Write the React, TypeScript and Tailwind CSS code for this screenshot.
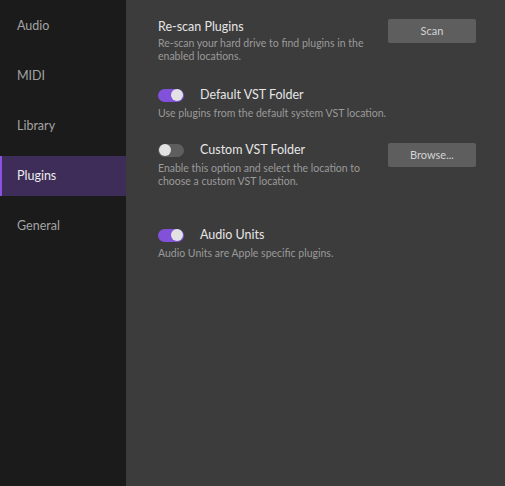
import React from "react"

const nav = ["Audio", "MIDI", "Library", "Plugins", "General"]

function Toggle({ on }: { on: boolean }) {
  return (
    <div
      className={`w-[26px] h-[13px] rounded-full flex items-center px-[1px] ${
        on ? "bg-[#8152d9] justify-end" : "bg-[#5e5e5e] justify-start"
      }`}
    >
      <div className="w-[12px] h-[12px] rounded-full bg-[#e2e2e2]" />
    </div>
  )
}

function Button({ label }: { label: string }) {
  return (
    <div className="w-[88px] h-[24px] shrink-0 rounded-[2px] bg-[#5e5e5e] flex items-center justify-center text-[11px] text-[#d4d4d4]">
      {label}
    </div>
  )
}

export default function App() {
  return (
    <div
      className="w-[505px] h-[486px] flex bg-[#3c3c3c]"
      style={{ fontFamily: "Lato, 'Noto Sans', sans-serif" }}
    >
      <aside className="w-[126px] h-full bg-[#1b1b1b] flex flex-col gap-[10px] pt-[6px]">
        {nav.map((item) => (
          <div
            key={item}
            className={`h-10 flex items-center text-[12.5px] ${
              item === "Plugins"
                ? "bg-[#3e2d58] border-l-2 border-[#8a52e2] pl-[15px] text-[#ececec]"
                : "pl-[17px] text-[#a3a3a3]"
            }`}
          >
            {item}
          </div>
        ))}
      </aside>

      <main className="flex-1 pl-[32px] pr-[29px] pt-[19px] flex flex-col">
        <div className="flex justify-between">
          <div>
            <div className="text-[12.5px] leading-4 text-[#e6e6e6]">Re-scan Plugins</div>
            <p className="mt-[2px] w-[220px] text-[10.5px] leading-[13px] text-[#9a9a9a]">
              Re-scan your hard drive to find plugins in the enabled locations.
            </p>
          </div>
          <Button label="Scan" />
        </div>

        <div className="mt-[24px]">
          <div className="h-4 flex items-center gap-4">
            <Toggle on />
            <span className="text-[12.5px] text-[#e6e6e6]">Default VST Folder</span>
          </div>
          <p className="mt-[4px] text-[10.5px] leading-[13px] text-[#9a9a9a]">
            Use plugins from the default system VST location.
          </p>
        </div>

        <div className="mt-[22px]">
          <div className="flex justify-between items-start h-4">
            <div className="h-4 flex items-center gap-4">
              <Toggle on={false} />
              <span className="text-[12.5px] text-[#e6e6e6]">Custom VST Folder</span>
            </div>
            <div className="mt-[1px]">
              <Button label="Browse..." />
            </div>
          </div>
          <p className="mt-[4px] max-w-[205px] text-[10.5px] leading-[13px] text-[#9a9a9a]">
            Enable this option and select the location to choose a custom VST location.
          </p>
        </div>

        <div className="mt-[39px]">
          <div className="h-4 flex items-center gap-4">
            <Toggle on />
            <span className="text-[12.5px] text-[#e6e6e6]">Audio Units</span>
          </div>
          <p className="mt-[4px] text-[10.5px] leading-[13px] text-[#9a9a9a]">
            Audio Units are Apple specific plugins.
          </p>
        </div>
      </main>
    </div>
  )
}
